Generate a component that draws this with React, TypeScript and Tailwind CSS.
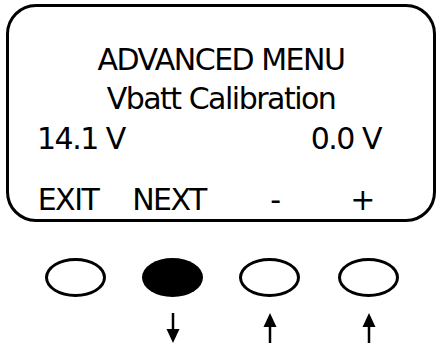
function ArrowDown() {
  return (
    <svg width="16" height="30" viewBox="0 0 16 30">
      <line x1="8" y1="0" x2="8" y2="19" stroke="black" strokeWidth="2.5" />
      <polygon points="1.5,16 14.5,16 8,30" fill="black" />
    </svg>
  );
}

function ArrowUp() {
  return (
    <svg width="16" height="30" viewBox="0 0 16 30">
      <polygon points="8,0 14.5,14 1.5,14" fill="black" />
      <line x1="8" y1="11" x2="8" y2="30" stroke="black" strokeWidth="2.5" />
    </svg>
  );
}

export default function App() {
  return (
    <div className="w-[437px] h-[345px] bg-white text-black overflow-hidden font-['DejaVu_Sans',sans-serif]">
      <div className="ml-[6px] mt-[4px] w-[430px] h-[218px] border-[3px] border-black rounded-[30px] pt-[33px] text-[30px] tracking-[-1.5px]">
        <div className="h-[39px] leading-[39px] text-center">ADVANCED MENU</div>
        <div className="h-[40px] leading-[39px] text-center">Vbatt Calibration</div>
        <div className="h-[61px] leading-[39px] flex justify-between pl-[28px] pr-[52px]">
          <span>14.1 V</span>
          <span>0.0 V</span>
        </div>
        <div className="h-[39px] leading-[39px] flex pl-[14px]">
          <span className="w-[90px] text-center">EXIT</span>
          <span className="w-[112px] text-center">NEXT</span>
          <span className="w-[100px] text-center">-</span>
          <span className="w-[74px] text-center">+</span>
        </div>
      </div>
      <div className="grid grid-cols-[97px_97px_97px_101px] pl-[27px] mt-[36px]">
        <div className="flex flex-col items-center">
          <div className="w-[61px] h-[39px] rounded-[50%] border-[3px] border-black" />
        </div>
        <div className="flex flex-col items-center">
          <div className="w-[61px] h-[39px] rounded-[50%] bg-black" />
          <div className="mt-[16px] flex"><ArrowDown /></div>
        </div>
        <div className="flex flex-col items-center">
          <div className="w-[61px] h-[39px] rounded-[50%] border-[3px] border-black" />
          <div className="mt-[16px] flex"><ArrowUp /></div>
        </div>
        <div className="flex flex-col items-center">
          <div className="w-[61px] h-[39px] rounded-[50%] border-[3px] border-black" />
          <div className="mt-[16px] flex"><ArrowUp /></div>
        </div>
      </div>
    </div>
  );
}
